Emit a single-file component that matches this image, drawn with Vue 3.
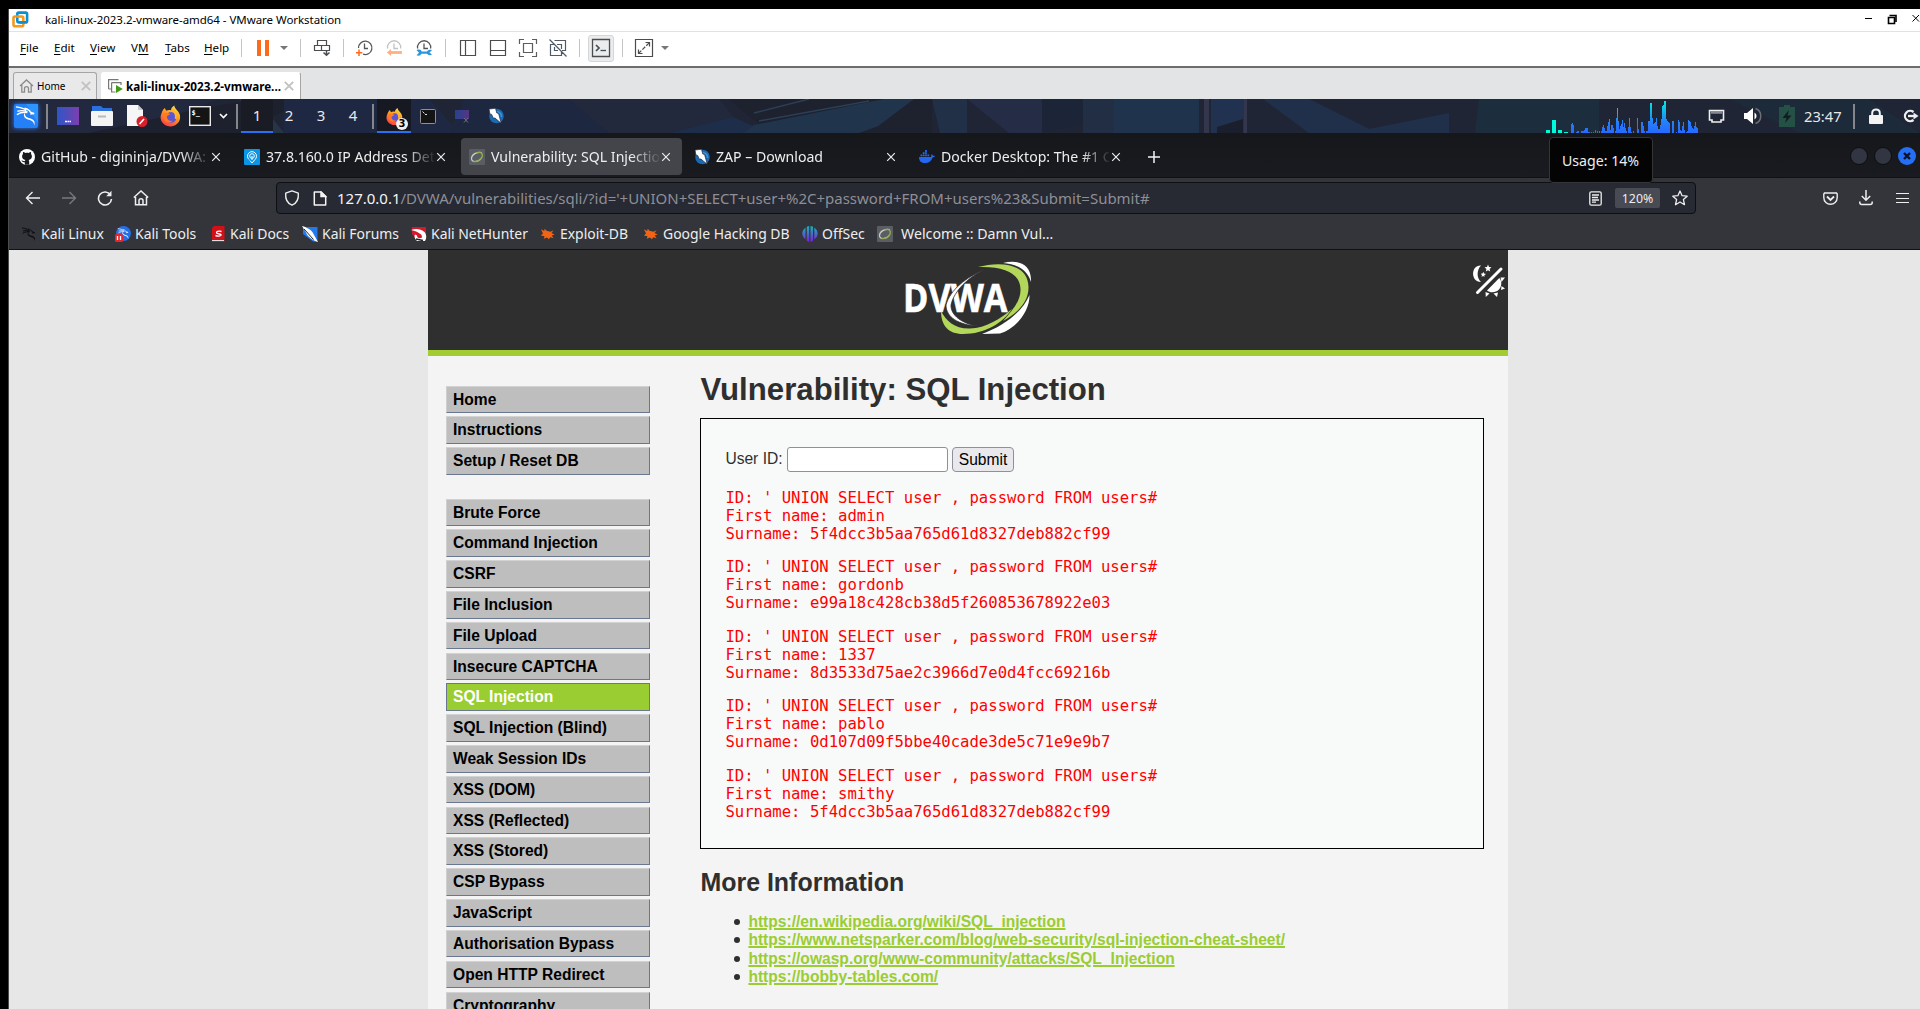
<script setup>
const menus = [['', 'F', 'ile'], ['', 'E', 'dit'], ['', 'V', 'iew'], ['V', 'M', ''], ['', 'T', 'abs'], ['', 'H', 'elp']]
// CPU graph bars: [x, width, height] for the meter, [x, height] for the history
const idle = [[0, 4, 3], [6, 4, 13], [12, 4, 3], [18, 4, 1]]
const load = [[25,9],[26,10],[27,8],[30,1],[31,2],[32,2],[35,2],[36,2],[37,2],[38,3],[39,5],[40,5],[41,5],[42,1],[43,1],[45,1],[47,1],[49,3],[51,2],[53,2],[55,2],[56,6],[57,8],[58,5],[59,2],[60,2],[61,7],[62,11],[63,14],[64,3],[65,8],[66,8],[67,5],[69,2],[70,15],[71,25],[72,12],[73,4],[74,7],[75,9],[76,13],[77,6],[78,10],[79,5],[80,2],[82,6],[83,15],[84,6],[85,1],[87,2],[91,15],[92,4],[95,11],[96,11],[97,7],[98,2],[100,2],[101,2],[102,12],[103,12],[104,30],[105,30],[106,15],[107,9],[108,10],[109,11],[110,15],[111,7],[112,4],[113,4],[114,8],[115,14],[116,27],[117,28],[118,32],[119,32],[120,14],[121,12],[122,11],[123,10],[126,12],[127,12],[130,1],[132,13],[133,11],[134,3],[135,2],[136,7],[137,11],[138,3],[140,1],[141,2],[142,13],[143,12],[144,11],[145,7],[146,5],[147,4],[148,7],[149,11],[150,6],[151,5]]
const navTop = ['Home', 'Instructions', 'Setup / Reset DB']
const navMain = ['Brute Force', 'Command Injection', 'CSRF', 'File Inclusion', 'File Upload', 'Insecure CAPTCHA', 'SQL Injection', 'SQL Injection (Blind)', 'Weak Session IDs', 'XSS (DOM)', 'XSS (Reflected)', 'XSS (Stored)', 'CSP Bypass', 'JavaScript', 'Authorisation Bypass', 'Open HTTP Redirect', 'Cryptography']
const rows = [
  ['admin', '5f4dcc3b5aa765d61d8327deb882cf99'],
  ['gordonb', 'e99a18c428cb38d5f260853678922e03'],
  ['1337', '8d3533d75ae2c3966d7e0d4fcc69216b'],
  ['pablo', '0d107d09f5bbe40cade3de5c71e9e9b7'],
  ['smithy', '5f4dcc3b5aa765d61d8327deb882cf99'],
]
const links = ['https://en.wikipedia.org/wiki/SQL_injection', 'https://www.netsparker.com/blog/web-security/sql-injection-cheat-sheet/', 'https://owasp.org/www-community/attacks/SQL_Injection', 'https://bobby-tables.com/']
</script>

<template>
  <div class="screen">
    <svg class="defs" width="0" height="0" aria-hidden="true">
      <defs>
        <linearGradient id="flame" x1="0.8" y1="0" x2="0.3" y2="1"><stop offset="0" stop-color="#ffe14d" /><stop offset=".45" stop-color="#ff9a1f" /><stop offset="1" stop-color="#ff3b4a" /></linearGradient>
        <linearGradient id="term" x1="0" y1="0" x2="1" y2="0"><stop offset="0" stop-color="#2c56c8" /><stop offset="1" stop-color="#7c3fae" /></linearGradient>
        <linearGradient id="cpu" gradientUnits="userSpaceOnUse" x1="0" y1="34" x2="0" y2="0"><stop offset="0" stop-color="#2769ff" /><stop offset=".3" stop-color="#267dfa" /><stop offset="1" stop-color="#00f5dc" /></linearGradient>
        <linearGradient id="off" x1="0" y1="0" x2="0" y2="1"><stop offset="0" stop-color="#18b7b4" /><stop offset="1" stop-color="#7a1ee0" /></linearGradient>
      </defs>
      <symbol id="firefox" viewBox="0 0 22 22">
        <path d="M2 7C2.500 5 4 3.500 5 2.500L6.500 5.500C8 4.500 10 4.500 11.500 5C11.500 3 13 1 15 0C15 3 19 5 20.500 9C23 16 17 22 11 22C5 22 0 17 .7 11.500C1 9.500 1.500 8.500 2 7Z" fill="url(#flame)" />
        <circle cx="11.500" cy="12.500" r="5.600" fill="#5a55d6" />
        <path d="M4 8C6 7 8.500 7.500 11 9C9.500 10.200 8 10.400 7.200 11.600C7 14.500 10 17 13.500 15.800C11 19.500 4.500 18 3.500 13Z" fill="#ff7a22" />
        <path d="M13 4C16 7 17.500 10 16.500 14" fill="none" stroke="#ffb52e" stroke-width="2" />
      </symbol>
      <symbol id="zap" viewBox="0 0 16 16">
        <circle cx="8.500" cy="8" r="7.300" fill="#1a69b3" /><path d="M9 3.500A5 5 0 0 1 13.500 9" fill="none" stroke="#3b95dc" stroke-width="1.500" />
        <path d="M1 1L7.500 .3L8.800 5L10.600 5.500L13.200 15.200L6.600 9.800L5.800 11L3.600 6.400L1.900 6Z" fill="#fff" stroke="#1b2b40" stroke-width=".7" />
      </symbol>
      <symbol id="close" viewBox="0 0 10 10"><path d="M1.200 1.200L8.800 8.800M8.800 1.200L1.200 8.800" fill="none" stroke="currentColor" stroke-width="1.200" /></symbol>
      <symbol id="vmclose" viewBox="0 0 10 10"><path d="M.8 .8L9.200 9.200M9.200 .8L.8 9.200" fill="none" stroke="currentColor" stroke-width="1.900" /></symbol>
      <symbol id="ring" viewBox="0 0 16 16">
        <rect width="16" height="16" rx="1" fill="#5a5d62" /><path d="M12.800 3.500C8 2.500 2.500 5.500 2.500 9.500C2.500 13.500 9 13.500 12 9.500" fill="none" stroke="#c9ccc8" stroke-width="1.200" /><path d="M7.500 3.800C12 2.300 14 4.500 13.200 7.500C12.500 10.500 8.500 13 4.500 12.600" fill="none" stroke="#95ae50" stroke-width="1.300" />
      </symbol>
      <symbol id="bug" viewBox="0 0 16 14">
        <path d="M1 2L4.500 3.800L5 1.500L7 3.500L11 4.500L14.500 3L12.300 6L15.500 7.500L12.500 8.500L14.500 11.500L11 10.500L9.500 12.500L7.500 10.800L4 12L4.800 9.500L1 8.500L3.200 6.500Z" fill="#f06414" />
      </symbol>
      <symbol id="dragon" viewBox="0 0 24 24">
        <path d="M1.500 3C6 3.500 9.500 4.500 12 6.500M3 7.500C7 6.500 10.500 6.800 13.500 8M2.500 11C6.500 8.500 10 8.300 13.500 8.800M10.500 4.500C14 5.500 16 6.500 16.500 8.500L20.500 10L16.500 10.500" fill="none" stroke="currentColor" stroke-width="1.500" />
        <path d="M12.500 8C9 11 12 14 16 14.800C20 15.600 22 18.500 20.500 22.500C20.500 19 18 17 15 16.500C10 15.500 7.500 10.500 12.500 8Z" fill="currentColor" />
      </symbol>
    </svg>

    <div class="window">
      <div class="titlebar">
        <svg class="vm-logo" width="17" height="17" viewBox="0 0 17 17" fill="none" stroke-width="2.600"><rect x="5.300" y="1.600" width="9.800" height="9.800" rx="1.500" stroke="#0c8fce" /><rect x="1.500" y="5.500" width="9.800" height="9.800" rx="1.500" stroke="#f39a1e" /><path d="M8.200 11.400H13" stroke="#0c8fce" /></svg>
        <span class="title">kali-linux-2023.2-vmware-amd64 - VMware Workstation</span>
        <svg class="wctl" width="58" height="12" viewBox="0 0 58 12" fill="none" stroke="#000"><path d="M3 5.500H10" /><path d="M26.500 4.500H32.500V10.500H26.500Z" stroke-width="1.600" /><path d="M27.500 2.500H34V9" stroke-width="1.600" /><path d="M50.500 2L57 8.500M57 2L50.500 8.500" /></svg>
      </div>

      <div class="menubar">
        <span v-for="(m, i) in menus" :key="i" class="menu" :class="'m' + i"><span>{{ m[0] }}<u>{{ m[1] }}</u>{{ m[2] }}</span></span>
        <i class="vsep"></i>
        <svg class="pause" width="13" height="16"><path d="M0 0H4V16H0ZM8 0H12V16H8Z" fill="#fd6a1c" /></svg>
        <svg class="drop d1" width="8" height="4"><path d="M0 0H8L4 4Z" fill="#777" /></svg>
        <i class="vsep s2"></i>
        <svg class="ic a" width="20" height="20" viewBox="0 0 20 20" fill="none" stroke="#4a4d50" stroke-width="1.200"><path d="M5.500 2.500H14.500V7.500H5.500ZM2.500 7.500H9.500V12.500H2.500ZM9.500 7.500H17.500V12.500H9.500Z" /><path d="M14.500 12V17M11.500 14.500L14.500 17.200L17.500 14.500" stroke-width="1.500" /></svg>
        <i class="vsep s3"></i>
        <svg class="ic b" width="20" height="20" viewBox="0 0 20 20" fill="none" stroke="#54575a" stroke-width="1.300"><path d="M4.500 10A6.700 6.700 0 1 1 9 16.200" /><path d="M10.500 5.500V10.500H14" /><path d="M5 11.500V18M2 14.700H8.300" stroke="#fd6a1c" stroke-width="1.500" /></svg>
        <svg class="ic c" width="20" height="20" viewBox="0 0 20 20" fill="none" stroke="#c3c3c3" stroke-width="1.300"><path d="M3.600 10.500A6.600 6.600 0 1 1 16.600 10.500" /><path d="M10 5.500V10.500H14" /><path d="M18 14.500H5.500" stroke="#ffb083" stroke-width="2.800" /><path d="M7 11L2.800 14.500L7 18Z" fill="#ffb083" stroke="none" /></svg>
        <svg class="ic c" width="20" height="20" viewBox="0 0 20 20" fill="none" stroke="#54575a" stroke-width="1.300"><path d="M3.600 10.500A6.600 6.600 0 1 1 16.600 10.500" /><path d="M10 5.500V10.500H14" /><path d="M2.500 12C6 11 7.500 12 7.500 13.500H13C14 11.800 16 11.300 18 12.200L15.500 14.500L18 16.500C16 17.800 14 17.300 13 15.800H7.500C6.500 17.800 4.500 18 2.500 17.200L5 14.700Z" fill="#2a97dd" stroke="none" /></svg>
        <i class="vsep s4"></i>
        <svg class="ic d" width="20" height="20" viewBox="0 0 20 20" fill="none" stroke="#4a4d50" stroke-width="1.200"><path d="M2.500 2.500H17.500V17.500H2.500ZM7.500 2.500V17.500" /></svg>
        <svg class="ic c" width="20" height="20" viewBox="0 0 20 20" fill="none" stroke="#4a4d50" stroke-width="1.200"><path d="M2.500 2.500H17.500V17.500H2.500ZM2.500 12.500H17.500" /></svg>
        <svg class="ic c" width="20" height="20" viewBox="0 0 20 20" fill="none" stroke="#5a5d60" stroke-width="1.200"><path d="M5.500 5.500H14.500V14.500H5.500ZM1.500 6V1.500H6M14 1.500H18.500V6M18.500 14V18.500H14M6 18.500H1.500V14" /></svg>
        <svg class="ic c" width="20" height="20" viewBox="0 0 20 20" fill="none" stroke="#4f5a66" stroke-width="1.200"><path d="M6.500 2.500H17.500V12.500H14M6 6.500H2.500V17.500H13.500V14M9 6.500H13.500V11M6.500 9V12.500H10M1.500 1.500L18.500 18.500" /></svg>
        <i class="vsep s5"></i>
        <span class="con"><svg width="20" height="20" viewBox="0 0 20 20" fill="none" stroke="#4a4d50" stroke-width="1.300"><path d="M1.500 1.500H18.500V18.500H1.500Z" /><path d="M5 7L8 10L5 13" stroke-width="1.700" /><path d="M9.500 12.500H15" /></svg></span>
        <i class="vsep s6"></i>
        <svg class="ic e" width="20" height="20" viewBox="0 0 20 20" fill="none" stroke="#4a4d50" stroke-width="1.200"><path d="M1.500 1.500H18.500V18.500H1.500ZM11.500 4.500H15.500V8.500M4.500 11.500V15.500H8.500" /><path d="M4.500 15.500L15.500 4.500" stroke-dasharray="4 1.500" /></svg>
        <svg class="drop d2" width="8" height="4"><path d="M0 0H8L4 4Z" fill="#777" /></svg>
      </div>

      <div class="vmtabs">
        <div class="vmtab home">
          <svg width="15" height="14" viewBox="0 0 15 14" fill="none" stroke="#8b8b8b" stroke-width="1.300"><path d="M1 7L7.500 1L14 7M2.800 6V13.200H5.500V9.500C5.500 7 9.500 7 9.500 9.500V13.200H12.200V6" /></svg>
          <span class="name">Home</span>
          <svg class="x" width="10" height="10"><use href="#vmclose" /></svg>
        </div>
        <div class="vmtab kali">
          <svg width="15" height="14" viewBox="0 0 15 14"><path d="M.6 10V.6H10.500M.6 10H3M3.600 3.600H13V6M3.600 3.600V13H7.500" fill="none" stroke="#777" stroke-width="1.200" /><path d="M8 6L14.800 10L8 14Z" fill="#3f9b12" /></svg>
          <span class="name">kali-linux-2023.2-vmware...</span>
          <svg class="x" width="10" height="10"><use href="#vmclose" /></svg>
        </div>
      </div>

      <div class="panel">
        <svg class="wall" width="1911" height="34" viewBox="0 0 1911 34" preserveAspectRatio="none">
          <rect width="1911" height="34" fill="#1f2535" />
          <g opacity=".75">
            <path d="M0 0H210L120 34H0Z" fill="#232a40" /><path d="M80 34L200 8L250 0H300L230 34Z" fill="#1d202b" /><path d="M230 0H248L275 34H262Z" fill="#2a3b50" /><path d="M275 0H420L450 34H275Z" fill="#1f2a48" />
            <path d="M455 0H560L600 34H440Z" fill="#1d2844" /><path d="M560 0H710L724 18L660 34H600Z" fill="#252b40" /><path d="M660 34L724 18L760 34Z" fill="#1e3050" /><path d="M720 0H923V34H760Z" fill="#1e202c" /><path d="M735 34L745 26L875 0H905L860 34Z" fill="#213a54" /><path d="M850 34L900 16L923 12V34Z" fill="#1e202c" /><path d="M750 22L860 2M745 14L800 0" stroke="#2f4860" stroke-width="1.500" />
            <path d="M923 0H958V34H931Z" fill="#22344e" /><path d="M958 0H1033V34H1000Z" fill="#282f4c" /><path d="M1033 0H1074V25L1033 34Z" fill="#1b2538" /><path d="M1074 0H1105V34H1074Z" fill="#223149" /><path d="M1105 0H1190V34H1105Z" fill="#203a54" /><path d="M1195 0H1200V34H1195ZM1235 0H1238V34H1234Z" fill="#3a3c55" /><path d="M1202 0H1235V34H1202Z" fill="#22375a" /><path d="M1208 28L1234 20V34H1208Z" fill="#1a1c29" /><path d="M1254 0H1300L1360 30L1440 14V34H1300Z" fill="#213452" /><path d="M1470 0H1590V34H1466Z" fill="#1c3042" /><path d="M1720 0H1860L1911 34H1790Z" fill="#1c2c3c" />
          </g>
        </svg>
        <svg class="kali-btn" width="26" height="26" viewBox="0 0 26 26" color="#fff"><rect x="1" y="1" width="24" height="24" rx="2" fill="#2480f7" /><path d="M13 1H25V20Z" fill="#2d95ff" /><svg x="1.500" y="1" width="23" height="23"><use href="#dragon" /></svg></svg>
        <i class="psep p1"></i>
        <svg class="g1" width="22" height="18"><rect width="22" height="18" fill="url(#term)" /><path d="M8 14.500H10M10.500 14.500H12M12.500 14.500H14" stroke="#fff" stroke-width="1.500" /></svg>
        <svg class="g2" width="22" height="20"><path d="M1 0H10L12 2H21V8H1Z" fill="#2a6fdb" /><rect y="5" width="22" height="15" rx="1" fill="#f4f4f4" /><path d="M7 10.500H15" stroke="#b9b9b9" stroke-width="2" /></svg>
        <svg class="g3" width="21" height="22"><path d="M0 0H11L16 5V21H0Z" fill="#f6f6f6" /><path d="M11 0V5H16Z" fill="#c8c8c8" /><circle cx="15" cy="16.500" r="5.500" fill="#d9202a" /><path d="M12.500 19L17 14" stroke="#fff" stroke-width="1.600" /></svg>
        <svg class="g4" width="21" height="22"><use href="#firefox" /></svg>
        <svg class="g5" width="22" height="20"><rect x=".7" y=".7" width="20.600" height="18.600" fill="#141414" stroke="#e9e9e9" stroke-width="1.400" /><text x="2.500" y="9" font-size="7" font-weight="700" font-family="DejaVu Sans Mono" fill="#fff">$_</text></svg>
        <svg class="g6" width="9" height="6" fill="none"><path d="M1 1L4.500 4.500L8 1" stroke="#fff" stroke-width="1.600" /></svg>
        <i class="psep p2"></i>
        <span class="ws on">1</span><span class="ws">2</span><span class="ws">3</span><span class="ws w4">4</span>
        <i class="psep"></i>
        <span class="task"><svg width="17" height="17"><use href="#firefox" /></svg><b class="badge">3</b></span>
        <svg class="g7" width="16" height="15"><rect x=".5" y=".5" width="15" height="14" rx="1" fill="#141414" stroke="#8f8f8f" /><path d="M2.500 2.500L4.500 4.500M5 5.500H7" stroke="#ddd" /></svg>
        <svg class="g8" width="15" height="13" viewBox="0 0 15 13"><rect width="14" height="9" fill="url(#term)" opacity=".6" /><path d="M9 8L13 12.500M13 8L9 12.500" stroke="#72727f" /></svg>
        <svg class="g9" width="16" height="16"><use href="#zap" /></svg>
        <svg class="graph" width="153" height="34" shape-rendering="crispEdges">
          <rect v-for="b in idle" :key="b[0]" :x="b[0]" :y="34 - b[2]" :width="b[1]" :height="b[2]" fill="#00fbdc" />
          <rect v-for="b in load" :key="b[0]" :x="b[0]" :y="34 - b[1]" width="1" :height="b[1]" fill="url(#cpu)" />
        </svg>
        <svg class="h1i" width="17" height="14" fill="none"><path d="M1.500 1.500H15.500V11H13V13H4V11H1.500Z" stroke="#f0f0f0" stroke-width="1.600" /><path d="M3.500 3.500H14" stroke="#f0f0f0" stroke-width="2.500" stroke-dasharray="1 1" /></svg>
        <svg class="h2i" width="18" height="18"><path d="M0 6H3L9 1V17L3 12H0Z" fill="#fff" /><path d="M10.500 5.500A4 4 0 0 1 10.500 12.500Z" fill="#fff" /><path d="M11.500 1.500C18.500 4 18.500 14 11.500 16.500" fill="none" stroke="#6d7078" stroke-width="1.500" /></svg>
        <svg class="h3i" width="16" height="22"><path d="M1 2H5V0H11V2H16V22H0V2Z" fill="#245045" /><path d="M10 5L3.500 13H7.500L6 18L12.500 10.500H8.500Z" fill="#111c22" /></svg>
        <span class="clock">23:47</span>
        <i class="psep p3"></i>
        <svg class="h4i" width="14" height="16"><rect y="7" width="14" height="9" rx="1" fill="#f3f3f3" /><path d="M3.200 8V5C3.200 .2 10.800 .2 10.800 5V8" fill="none" stroke="#f3f3f3" stroke-width="2" /></svg>
        <svg class="h5i" width="16" height="14" fill="none"><path d="M10.500 3A5.200 5.200 0 1 0 10.500 11" stroke="#eee" stroke-width="2.300" /><path d="M5 7H12" stroke="#eee" stroke-width="2.300" /><path d="M10.500 3.500L15.500 7L10.500 10.500Z" fill="#eee" /></svg>
        <div class="tooltip">Usage: 14%</div>
      </div>

      <div class="browser">
        <div class="fftabs">
          <div class="fftab">
            <svg width="16" height="16" viewBox="0 0 16 16"><circle cx="8" cy="8" r="8" fill="#fff" /><path d="M5.800 15.800V13.200C3.300 13.600 2.900 12 2.300 11.300C3.800 11.300 4 12.500 5.800 12.100C5.900 11.500 6.200 11.200 6.400 11C4.200 10.700 3.100 9.600 3.100 7.300C3.100 6.400 3.400 5.600 4 5.100C3.700 4.300 3.800 3.700 4.100 3C5 3 5.700 3.500 6.200 3.900C7.400 3.600 8.600 3.600 9.800 3.900C10.300 3.500 11 3 11.900 3C12.200 3.700 12.300 4.300 12 5.100C12.600 5.600 12.900 6.400 12.900 7.300C12.900 9.600 11.800 10.700 9.600 11C10 11.400 10.200 12 10.200 12.600V15.800Z" fill="#1a1b1f" /></svg>
            <span class="label">GitHub - digininja/DVWA:</span><svg class="x" width="10" height="10"><use href="#close" /></svg>
          </div>
          <div class="fftab">
            <svg width="16" height="16" fill="none" stroke="#fff"><rect width="16" height="16" rx="1" fill="#0a95e6" stroke="none" /><path d="M5 10.500A4.500 4.500 0 1 1 11 10.500L8 14L5.800 11.500" /><circle cx="8" cy="7" r="2.300" /><path d="M8 7V11" /></svg>
            <span class="label">37.8.160.0 IP Address Det</span><svg class="x" width="10" height="10"><use href="#close" /></svg>
          </div>
          <div class="fftab active">
            <svg width="16" height="16"><use href="#ring" /></svg>
            <span class="label">Vulnerability: SQL Injectio</span><svg class="x" width="10" height="10"><use href="#close" /></svg>
          </div>
          <div class="fftab">
            <svg width="16" height="16"><use href="#zap" /></svg>
            <span class="label">ZAP – Download</span><svg class="x" width="10" height="10"><use href="#close" /></svg>
          </div>
          <div class="fftab">
            <svg width="16" height="16" viewBox="0 0 16 16" fill="#2268f0"><path d="M0 8H12C12.500 7.500 12.300 6.500 12 6L13 5.200C13.600 5.800 13.800 6.300 13.900 6.800C14.700 6.600 15.500 6.700 16 7.100C15.500 8.200 14.600 8.500 13.600 8.500C12 13 9 14 6 14C2.500 14 0 12.500 0 8Z" /><path d="M1.500 5.500H3.300V7.300H1.500ZM3.800 5.500H5.600V7.300H3.800ZM6.100 5.500H7.900V7.300H6.100ZM8.400 5.500H10.200V7.300H8.400ZM3.800 3.300H5.600V5.100H3.800ZM6.100 3.300H7.900V5.100H6.100ZM6.100 1.100H7.900V2.900H6.100Z" /></svg>
            <span class="label">Docker Desktop: The #1 C</span><svg class="x" width="10" height="10"><use href="#close" /></svg>
          </div>
          <svg class="plus" width="14" height="14"><path d="M7 1V13M1 7H13" stroke="#f4f4f6" stroke-width="1.500" /></svg>
          <div class="dots"><i></i><i></i><svg width="18" height="18"><circle cx="9" cy="9" r="9" fill="#256ff6" /><path d="M6 6L12 12M12 6L6 12" stroke="#0b1220" stroke-width="2.400" /></svg></div>
        </div>

        <div class="navbar">
          <svg class="n1" width="16" height="16" fill="none" stroke="#eee" stroke-width="1.400"><path d="M15 8H1.500M7.500 2L1.500 8L7.500 14" /></svg>
          <svg class="n2" width="16" height="16" fill="none" stroke="#77797e" stroke-width="1.400"><path d="M1 8H14.500M8.500 2L14.500 8L8.500 14" /></svg>
          <svg class="n2" width="16" height="16" fill="none" stroke="#eee" stroke-width="1.600"><path d="M13.500 5A6.500 6.500 0 1 0 14.500 9" /><path d="M14.500 .8V6.200H9.200Z" fill="#eee" stroke="none" /></svg>
          <svg class="n3" width="16" height="16" fill="none" stroke="#eee" stroke-width="1.500"><path d="M.8 7.500L8 1L15.200 7.500M2.500 7V14.800H13.500V7M6 14.500V10.500C6 8 10 8 10 10.500V14.500" /></svg>
          <div class="url">
            <svg class="u1" width="16" height="16" fill="none" stroke="#eee" stroke-width="1.400"><path d="M8 .9L14.300 3.200C14.800 9 12 13.500 8 15.200C4 13.500 1.200 9 1.700 3.200Z" stroke-linejoin="round" /></svg>
            <svg class="u2" width="14" height="15" fill="none" stroke="#f4f4f4" stroke-width="1.500"><path d="M1.300 1H8L12.700 5.500V14H1.300Z" stroke-linejoin="round" /><path d="M8 1V5.500H12.700Z" fill="#eee" /></svg>
            <span class="addr"><b>127.0.0.1</b>/DVWA/vulnerabilities/sqli/?id='+UNION+SELECT+user+%2C+password+FROM+users%23&amp;Submit=Submit#</span>
            <svg class="u3" width="13" height="15" fill="none" stroke="#eee" stroke-width="1.300"><rect x=".8" y=".8" width="11.400" height="13.400" rx="1.500" /><path d="M3 4H10M3 6.500H9M3 9H10M3 11.200H7" /></svg>
            <span class="zoom">120%</span>
            <svg class="u4" width="16" height="16" fill="none" stroke="#eee" stroke-width="1.300"><path d="M8 1L10.100 5.700L15.200 6.200L11.400 9.600L12.500 14.700L8 12L3.500 14.700L4.600 9.600L.8 6.200L5.900 5.700Z" stroke-linejoin="round" /></svg>
          </div>
          <svg class="r1" width="15" height="13" fill="none" stroke="#eee" stroke-width="1.400"><path d="M1.500 1H13.500L14.200 2V5.500C14.200 14.500 .8 14.500 .8 5.500V2Z" /><path d="M4 4.500L7.500 8L11 4.500" stroke-width="1.800" /></svg>
          <svg class="r2" width="14" height="16" fill="none" stroke="#eee" stroke-width="1.500"><path d="M7 0V10M2.800 6L7 10.300L11.200 6M.8 11.500V12.500Q.8 14.500 2.800 14.500H11.200Q13.200 14.500 13.200 12.500V11.500" /></svg>
          <svg class="r3" width="13" height="12" shape-rendering="crispEdges"><path d="M0 1.500H13M0 6H13M0 10.500H13" stroke="#eee" /></svg>
        </div>

        <div class="bookmarks">
          <span class="bm k1"><svg width="16" height="16" color="#0c0c0e"><use href="#dragon" /></svg><span>Kali Linux</span></span>
          <span class="bm k2"><svg width="16" height="16" color="#dfe9ff"><circle cx="8.500" cy="7.500" r="7.500" fill="#256fe6" /><svg x="2" y="1" width="13" height="13"><use href="#dragon" /></svg><rect y="8" width="8" height="8" rx="1.500" fill="#e5262e" /><path d="M2.500 10V14M5.500 10V14" stroke="#fff" stroke-width="1.300" /></svg><span>Kali Tools</span></span>
          <span class="bm k3"><svg width="13" height="16"><path d="M2 0H12.500V16H0V2Z" fill="#d11119" /><path d="M0 14.500H12" stroke="#ddd" /><path d="M9.500 5.500C6.500 4.500 3.500 5.500 5 7.300C6.500 8.500 9.500 7.500 9 9.300C8.500 10.300 5.500 10.300 3.500 9.500" fill="none" stroke="#fff" stroke-width="1.400" /></svg><span>Kali Docs</span></span>
          <span class="bm k4"><svg width="16" height="16"><path d="M1 1H15.500V15.500L11 15.500L1 8Z" fill="#2479ec" /><path d="M0 0C5 1.500 10 4 11.500 8L16 16C10 14 5 10 4 6.500Z" fill="#fff" /><path d="M2 3L11.500 13.500" stroke="#222" /></svg><span>Kali Forums</span></span>
          <span class="bm k5"><svg width="16" height="16"><path d="M1 1H15V8L10 15H7L1 8Z" fill="#d5192c" /><path d="M0 4C5 2 10 3 13.500 6C15.500 8.500 16 12 14 15H6C3.500 13 3 10 4 8.500L6 9.500C6 12 8.500 13 11 11.500C11.500 8.500 8 6 0 4Z" fill="#fff" /><path d="M5 13L12 14.500" stroke="#222" stroke-width="1.500" /></svg><span>Kali NetHunter</span></span>
          <span class="bm k6"><svg width="15" height="14"><use href="#bug" /></svg><span>Exploit-DB</span></span>
          <span class="bm k7"><svg width="15" height="14"><use href="#bug" /></svg><span>Google Hacking DB</span></span>
          <span class="bm k8"><svg width="16" height="16" fill="url(#off)"><path d="M3.500 1.500V13.500C-.8 10 -.8 5 3.500 1.500ZM4.800 .8L7.200 .1V15.900L4.800 14.800ZM8.500 .1L11 .8V14.800L8.500 15.900ZM12.300 1.500C16.800 5 16.800 10 12.300 13.500Z" /></svg><span>OffSec</span></span>
          <span class="bm k9"><svg width="16" height="16"><use href="#ring" /></svg><span>Welcome :: Damn Vul…</span></span>
        </div>
      </div>

      <div class="page">
        <div class="container">
          <header>
            <svg class="logo" width="140" height="85" viewBox="0 0 140 85">
              <g font-family="Open Sans, sans-serif" font-weight="700" font-size="40" fill="#fff" stroke="#fff" stroke-width=".6">
                <text x="3" y="56.800" textLength="104.500" lengthAdjust="spacingAndGlyphs">DVWA</text>
              </g>
              <path d="M86 14C66 22 50 35 46 50C46 62 58 70 78 71C62 69 50.500 60 51 50C54 36 68 22 86 14Z" fill="#fff" stroke="#2f2f2f" stroke-width=".8" />
              <path d="M78 12C100 6 128 8 128.500 32C129 48 115 60 103 66C112 56 121 46 120.500 34C120 18 104 11 78 12Z" fill="#b3d75b" />
              <path d="M41 56C41 70 48 79 63 79C85 79 103 68 112 54C100 64 86 73 70 73.500C55 74 46 66 41 56Z" fill="#b3d75b" />
              <path d="M103 8C118 4 132 9 131 27C128 16 118 9 103 8Z" fill="#fff" />
              <path d="M129.500 40C130 56 116 74 100 78.500L82 79C102 72 122 58 129.500 40Z" fill="#fff" />
            </svg>
            <svg class="theme" width="38" height="38" viewBox="0 0 38 38" fill="#fff"><path d="M11 3.500C.5 3 .5 20 11 20C6.500 16 6.500 8 11 3.500Z" /><path d="M18 2.500L19 5L21.500 5.300L19.600 7L20.200 9.500L18 8.200L15.800 9.500L16.400 7L14.500 5.300L17 5ZM13.300 9.800L14 11.600L16 12L14.300 13.200L14.500 15L13.200 14L11.500 14.800L12 13L10.700 11.800L12.500 11.600Z" /><path d="M31 7L7.500 30.500" stroke="#fff" stroke-width="3" stroke-linecap="round" /><path d="M29.300 16L17 28.500C20 31 26 31 29 27.500C32 24 32 19 29.300 16Z" /><path d="M30.500 15.500L35 15.500L31.500 20ZM31.500 24L35 26.500L31 28ZM23.500 31.500L28 30.500L27 35ZM15.500 30L19.500 31.500L15.800 35Z" /></svg>
          </header>
          <div class="cols">
            <nav>
              <ul><li v-for="n in navTop" :key="n">{{ n }}</li></ul>
              <ul><li v-for="n in navMain" :key="n" :class="{ sel: n === 'SQL Injection' }">{{ n }}</li></ul>
            </nav>
            <main>
              <h1>Vulnerability: SQL Injection</h1>
              <section class="box">
                <p class="form"><span>User ID:</span><input type="text" /><button>Submit</button></p>
                <pre v-for="r in rows" :key="r[0]">ID: ' UNION SELECT user , password FROM users#
First name: {{ r[0] }}
Surname: {{ r[1] }}</pre>
              </section>
              <h2>More Information</h2>
              <ul class="links"><li v-for="l in links" :key="l"><a>{{ l }}</a></li></ul>
            </main>
          </div>
        </div>
      </div>
    </div>
  </div>
</template>

<style>
body { margin: 0; overflow: hidden; }
</style>

<style scoped>
* { box-sizing: border-box; }
.screen { width: 1920px; height: 1009px; overflow: hidden; background: #000; padding: 9px 0 0 8px; font-family: "Noto Sans", sans-serif; }
.defs { position: absolute; }
.window { width: 1912px; height: 1000px; border-left: 1px solid #4c4c4c; display: flex; flex-direction: column; }
svg { flex: none; display: block; }
.titlebar { height: 23px; background: #fff; border-bottom: 1px solid #e2e2e2; display: flex; align-items: flex-start; padding: 2px 0 0 3px; flex: none; }
.title { margin-left: 16px; font: 11.500px/18px "Noto Sans", sans-serif; letter-spacing: -0.040px; color: #000; white-space: nowrap; }
.wctl { margin: 2px 0 0 auto; }
.menubar { height: 36px; flex: none; background: #fff; border-bottom: 2px solid #6d6d6d; display: flex; align-items: center; padding: 0 0 2px 11px; font: 11.600px/18px "Noto Sans", sans-serif; color: #000; }
.menu { white-space: nowrap; height: 17px; margin-top: -1px; }
.menu u { text-underline-offset: 2px; }
.m0 { width: 34px; } .m1 { width: 36px; } .m2 { width: 41px; } .m3 { width: 34px; } .m4 { width: 39px; } .m5 { width: 37px; }
.vsep { width: 1px; height: 18px; background: #c4c4c4; flex: none; }
.pause { margin-left: 15px; } .d1 { margin-left: 10px; } .s2 { margin-left: 12px; }
.a { margin-left: 11px; } .s3 { margin-left: 11px; } .b { margin-left: 10px; } .c { margin-left: 10px; }
.s4 { margin-left: 11px; } .d { margin-left: 12px; } .s5 { margin-left: 11px; } .s6 { margin-left: 8px; } .e { margin-left: 11px; } .d2 { margin-left: 7px; }
.con { margin-left: 8px; width: 26px; height: 27px; border: 1px solid #d5d6d8; border-radius: 3px; background: #ebecee; display: flex; align-items: center; justify-content: center; flex: none; }
.vmtabs { height: 31px; flex: none; background: #e3e4e5; display: flex; align-items: flex-end; padding-left: 4px; font: 10px/16px "Noto Sans", sans-serif; color: #000; }
.vmtab { height: 27px; border: 1px solid #a5a5a5; border-bottom: 0; border-radius: 3px 3px 0 0; display: flex; align-items: center; white-space: nowrap; }
.vmtab .name { margin-left: 3px; }
.vmtab .x { margin-left: auto; color: #c2c2c2; }
.home { width: 84px; padding: 0 5px; background: #e9e9ea; }
.kali { width: 200px; margin-left: 4px; padding: 0 6px 0 6px; background: #fff; border-color: #fff #a5a5a5 #fff #fff; font-weight: 700; font-size: 11.700px; }
.panel { height: 34px; flex: none; position: relative; display: flex; align-items: center; padding-left: 4px; color: #e8e8ea; }
.panel > * { position: relative; }
.panel > .wall { position: absolute; left: 0; top: 0; }
.kali-btn { filter: drop-shadow(0 0 2px #2a80ff); }
.psep { width: 2px; height: 25px; background: #85868c; flex: none; }
.p1 { margin-left: 7px; } .g1 { margin-left: 9px; } .g2 { margin-left: 12px; } .g3 { margin-left: 14px; } .g4 { margin-left: 12px; } .g5 { margin-left: 8px; } .g6 { margin-left: 8px; } .p2 { margin-left: 8px; }
.ws { width: 32px; height: 34px; font: 15px/33px "Noto Sans", sans-serif; text-align: center; }
.ws.on { margin-left: 3px; background: #191c25; border-bottom: 2px solid #2671f5; }
.w4 { margin-right: 3px; }
.task { width: 34px; height: 34px; margin-left: 3px; background: #161922; border-bottom: 2px solid #2671f5; padding: 9px 0 0 9px; }
.badge { position: absolute; left: 19px; top: 19px; width: 12px; height: 12px; border-radius: 50%; background: #efefef; color: #000; font: 700 10px/12px "DejaVu Sans", sans-serif; text-align: center; }
.g7 { margin-left: 9px; } .g8 { margin-left: 19px; } .g9 { margin-left: 18px; }
.graph { margin-left: 1042px; }
.h1i { margin-left: 9px; } .h2i { margin-left: 19px; } .h3i { margin-left: 17px; }
.clock { margin-left: 9px; width: 40px; font: 14.700px/33px "Noto Sans", sans-serif; white-space: nowrap; }
.p3 { margin-left: 9px; } .h4i { margin-left: 14px; } .h5i { margin-left: 20px; }
.panel > .tooltip { position: absolute; z-index: 5; left: 1540px; top: 38px; width: 104px; height: 46px; border: 1px solid #343539; border-radius: 4px; background: #040405; color: #eee; font: 14.150px/46px "Noto Sans", sans-serif; padding-left: 12px; white-space: nowrap; }
.browser { flex: none; height: 117px; font: 14.100px/20px "Noto Sans", sans-serif; color: #eee; }
.fftabs { height: 45px; background: linear-gradient(#16171b, #1a1b20); display: flex; align-items: flex-start; padding-top: 5px; border-bottom: 1px solid #101114; }
.fftab { width: 221px; height: 37px; margin-right: 4px; border-radius: 4px; display: flex; align-items: center; padding-left: 8px; }
.fftab:first-child { padding-left: 10px; width: 223px; }
.fftab.active { background: #43454b; }
.label { width: 168px; height: 22px; line-height: 22px; margin-left: 6px; white-space: nowrap; mask-image: linear-gradient(90deg, #000 140px, transparent 170px); }
.fftab .x { margin-left: 2px; }
.plus { margin: 12px 0 0 11px; }
.dots { margin: 9px 4px 0 auto; display: flex; gap: 6px; }
.dots i { width: 18px; height: 18px; border-radius: 50%; background: #323643; border: 1px solid #0c0d10; }
.navbar { height: 39px; background: #33353b; display: flex; align-items: center; padding: 1px 0 0 16px; }
.n2 { margin-left: 20px; } .n3 { margin-left: 20px; }
.url { width: 1420px; height: 32px; margin-left: 127px; background: #272933; border: 1px solid #0e0f13; border-radius: 4px; display: flex; align-items: center; color: #8e8f96; }
.u1 { margin-left: 7px; } .u2 { margin-left: 13px; }
.addr { margin-left: 10px; width: 1252px; white-space: nowrap; font-size: 14.990px; }
.addr b { font-weight: 400; color: #f4f4f6; }
.zoom { margin-left: 13px; width: 45px; height: 20px; background: #484a54; border-radius: 2px; color: #eee; font-size: 12.300px; line-height: 21px; text-align: center; }
.u4 { margin-left: 12px; }
.r1 { margin-left: 127px; } .r2 { margin-left: 21px; } .r3 { margin-left: 23px; }
.bookmarks { height: 33px; background: #33353b; border-bottom: 1px solid #101114; display: flex; align-items: center; padding: 2px 0 0 12px; font-size: 13.950px; }
.bm { display: flex; align-items: center; white-space: nowrap; flex: none; }
.bm span { margin-left: 4px; }
.k1 { width: 94px; } .k2 { width: 97px; } .k3 { width: 90px; } .k4 { width: 109px; } .k5 { width: 129px; } .k6 { width: 103px; } .k7 { width: 159px; } .k8 { width: 75px; } .k9 { width: 190px; }
.bm.k3 span, .bm.k6 span, .bm.k7 span { margin-left: 5px; }
.bm.k9 span { margin-left: 8px; font-size: 14.200px; }
.page { flex: 1; background: #e7e7e7; min-height: 0; overflow: hidden; font-family: "Liberation Sans", Arial, sans-serif; font-size: 15.600px; color: #2f2f2f; }
.container { width: 1080px; height: 760px; margin-left: 419px; background: #f4f4f4; }
header { height: 106px; background: #2f2f2f; border-bottom: 6px solid #a1cc33; display: flex; align-items: flex-start; }
.logo { margin: 5px 0 0 472px; }
.theme { margin: 12px 0 0 430px; }
.cols { display: flex; }
nav { width: 204px; margin-left: 18px; padding-top: 29.600px; flex: none; }
nav ul { list-style: none; margin: 0 0 23.700px; padding: 0; }
nav li { height: 27.600px; margin-bottom: 3.220px; background: #bebebe; border: 1px solid; border-color: #d2d2d2 #69778f #69778f #cfcfcf; padding-left: 6px; font-weight: 700; line-height: 25.600px; color: #000; white-space: nowrap; }
nav li.sel { background: #9acd32; color: #fff; border-color: #69778f; }
main { margin-left: 50.400px; width: 784px; }
h1 { margin: 15px 0 0; font-size: 31.200px; line-height: 38px; height: 47px; white-space: nowrap; }
.box { height: 431px; width: 784px; border: 1px solid #000; background: #f8fafa; padding: 28px 24px 0; }
.form { margin: 0; height: 25px; display: flex; align-items: center; line-height: 18px; }
.form span { margin-top: -2px; }
.form input { width: 161px; height: 25px; margin: 0 0 0 4.500px; border: 1px solid #8f8f9d; border-radius: 3px; background: #fff; }
.form button { width: 62px; height: 25px; margin: 0 0 0 4px; padding: 0; border: 1px solid #8f8f9d; border-radius: 4px; background: #e9e9ed; font: 15.600px "Liberation Sans", sans-serif; color: #000; }
.box pre { margin: 15.600px 0 0; font: 15.600px/18px "DejaVu Sans Mono", monospace; color: #f00; }
.form + pre { margin-top: 16.600px; }
h2 { margin: 18px 0 0; font-size: 24.960px; line-height: 30px; white-space: nowrap; }
.links { list-style: none; margin: 16px 0 0; padding: 0 0 0 34px; line-height: 18.300px; }
.links li { display: flex; align-items: center; }
.links li::before { content: ""; width: 6px; height: 6px; margin-right: 8px; border-radius: 50%; background: #2f2f2f; flex: none; }
.links a { color: #9acd32; font-weight: 700; text-decoration: underline; text-decoration-thickness: 2px; text-decoration-skip-ink: auto; white-space: nowrap; }
</style>
